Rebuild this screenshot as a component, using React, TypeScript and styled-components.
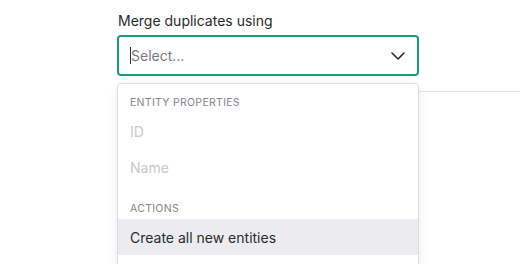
import styled, { createGlobalStyle } from "styled-components";

const GlobalStyle = createGlobalStyle`
  html, body {
    margin: 0;
    padding: 0;
    background: #ffffff;
    font-family: Inter, "Liberation Sans", Arial, sans-serif;
  }
`;

const Page = styled.div`
  position: relative;
  width: 520px;
  height: 264px;
  overflow: hidden;
`;

const Field = styled.div`
  position: relative;
  width: 302px;
  margin-left: 117px;
  padding-top: 12px;
`;

const Label = styled.label`
  display: block;
  font-size: 14px;
  line-height: 18px;
  color: #2a2a2e;
  margin-left: 1px;
  margin-bottom: 5px;
`;

const SelectBox = styled.div`
  box-sizing: border-box;
  display: flex;
  align-items: center;
  height: 41px;
  padding: 0 12px 0 11px;
  border: 2px solid #1a9e6e;
  border-radius: 4px;
  background: #fff;
`;

const Caret = styled.span`
  width: 1px;
  height: 17px;
  background: #333;
`;

const Placeholder = styled.span`
  flex: 1;
  font-size: 14px;
  color: #7a7a80;
`;

const Chevron = () => (
  <svg width="14" height="8" viewBox="0 0 14 8" fill="none">
    <path d="M1 1l6 6 6-6" stroke="#2a2a2e" strokeWidth="1.6" strokeLinecap="round" strokeLinejoin="round" />
  </svg>
);

const Divider = styled.div`
  margin: 15px 0 0 117px;
  height: 1px;
  background: #e3e3e8;
`;

const Menu = styled.div`
  position: absolute;
  top: 83px;
  left: 117px;
  width: 302px;
  box-sizing: border-box;
  border: 1px solid #dcdce0;
  border-radius: 4px;
  background: #fff;
  box-shadow: 0 2px 10px rgba(0, 0, 0, 0.08);
  padding-bottom: 20px;
`;

const Group = styled.div<{ $gap?: number }>`
  padding-top: ${(p) => p.$gap ?? 0}px;
`;

const GroupHeader = styled.div`
  padding: 12px 12px 3px;
  font-size: 10.5px;
  line-height: 14px;
  letter-spacing: 0.3px;
  text-transform: uppercase;
  color: #85858b;
`;

const Item = styled.div<{ $disabled?: boolean; $active?: boolean }>`
  height: 36px;
  display: flex;
  align-items: center;
  padding: 0 12px;
  font-size: 14px;
  color: ${(p) => (p.$disabled ? "#c8c8cd" : "#2a2a2e")};
  background: ${(p) => (p.$active ? "#ececf0" : "transparent")};
`;

export default function App() {
  return (
    <Page>
      <GlobalStyle />
      <Field>
        <Label>Merge duplicates using</Label>
        <SelectBox>
          <Caret />
          <Placeholder>Select...</Placeholder>
          <Chevron />
        </SelectBox>
      </Field>
      <Divider />
      <Menu>
        <Group>
          <GroupHeader>Entity properties</GroupHeader>
          <Item $disabled>ID</Item>
          <Item $disabled>Name</Item>
        </Group>
        <Group $gap={5}>
          <GroupHeader>Actions</GroupHeader>
          <Item $active>Create all new entities</Item>
        </Group>
      </Menu>
    </Page>
  );
}
